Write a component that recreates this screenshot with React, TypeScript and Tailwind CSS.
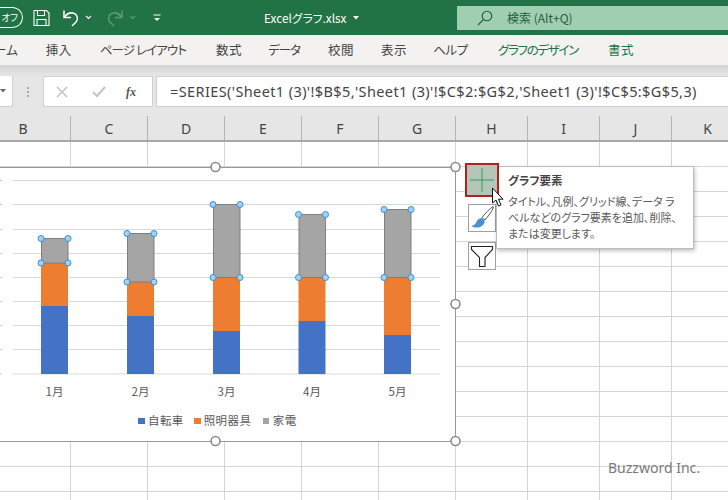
import React from "react";

const ui = '"Noto Sans CJK JP","Noto Sans",sans-serif';
const colW = [71, 77, 77, 77, 77, 77, 72, 72, 72, 72];
const colN = ["B", "C", "D", "E", "F", "G", "H", "I", "J", "K"];
const tabs: [string, number, number, string][] = [
  ["ホーム", -18, 0, "#444"],
  ["挿入", 28, 0.5, "#444"],
  ["ページ レイアウト", 28, -0.9, "#444"],
  ["数式", 30, 0.5, "#444"],
  ["データ", 26, -1, "#444"],
  ["校閲", 28, 0.5, "#444"],
  ["表示", 27, 0.5, "#444"],
  ["ヘルプ", 26, -0.3, "#444"],
  ["グラフのデザイン", 30, -1.3, "#217346"],
  ["書式", 30, 0.5, "#217346"],
];
const bars = [
  { x: 41, b: 306, o: 263, g: 238.5, m: "1月" },
  { x: 127, b: 316, o: 282, g: 233.5, m: "2月" },
  { x: 213, b: 331, o: 277.5, g: 204.5, m: "3月" },
  { x: 298.5, b: 321, o: 277.5, g: 214.5, m: "4月" },
  { x: 384, b: 335, o: 277.5, g: 209.5, m: "5月" },
];
const grid = [180.5, 204.5, 229.5, 253.5, 277.5, 301.5, 325.5, 349.5, 374];

function Handle({ cx, cy }: { cx: number; cy: number }) {
  return <circle cx={cx} cy={cy} r={3} fill="#9fd3f7" stroke="#3d8fd1" strokeWidth={1} />;
}
function Ring({ cx, cy }: { cx: number; cy: number }) {
  return <circle cx={cx} cy={cy} r={4.5} fill="#fff" stroke="#8c8c8c" strokeWidth={1.6} />;
}

export default function App() {
  return (
    <div className="w-[728px] h-[500px] overflow-hidden bg-white flex flex-col [font-feature-settings:'palt']" style={{ fontFamily: ui }}>
      {/* title bar */}
      <div className="h-[35px] shrink-0 bg-[#217346] flex items-center text-white relative">
        <div className="w-[20px] h-[19px] -ml-[2px] mr-[10px] rounded-r-full border border-l-0 border-white flex items-center justify-end pr-[4px] text-[9.5px] leading-none box-content shrink-0">オフ</div>
        <svg width="17" height="18" viewBox="0 0 17 18" fill="none" stroke="#fff" strokeWidth="1.1">
          <path d="M1 1.5h12.5l2.5 2.5v12.5H1z" />
          <path d="M4.5 1.5v5h7v-5M4 16.5v-6h9v6" />
        </svg>
        <svg className="ml-[12px]" width="18" height="18" viewBox="0 0 18 18" fill="none" stroke="#fff" strokeWidth="1.5">
          <path d="M2 1.5v7h7" />
          <path d="M2.5 8C5 4.5 8 3.5 11 4c4 .8 5.500 5 3.500 8.500L10 17" />
        </svg>
        <svg className="ml-[5px]" width="7" height="5" viewBox="0 0 7 5" fill="none" stroke="#fff" strokeWidth="1.2"><path d="M1 1l2.500 2.500L6 1" /></svg>
        <svg className="ml-[14px]" width="18" height="18" viewBox="0 0 18 18" fill="none" stroke="#5c9a7a" strokeWidth="1.5">
          <path d="M16 1.500v7H9" />
          <path d="M15.500 8C13 4.500 10 3.500 7 4c-4 .8-5.500 5-3.500 8.500L8 17" />
        </svg>
        <svg className="ml-[5px]" width="7" height="5" viewBox="0 0 7 5" fill="none" stroke="#5c9a7a" strokeWidth="1.2"><path d="M1 1l2.500 2.500L6 1" /></svg>
        <svg className="ml-[17px]" width="8" height="8" viewBox="0 0 8 8" fill="#fff"><rect x="0.5" y="0.5" width="7" height="1" /><path d="M1 4h6L4 7z" /></svg>
        <span className="ml-[103px] text-[11.8px] whitespace-nowrap w-[83px]">Excelグラフ.xlsx</span>
        <svg className="ml-[6px]" width="6" height="4" viewBox="0 0 6 4" fill="#fff"><path d="M0 0h6L3 3.500z" /></svg>
        <div className="absolute left-[457px] right-0 top-[6px] h-[24px] bg-[#a0ceb1] flex items-center text-[#1f5e3c]">
          <svg className="ml-[20px]" width="16" height="16" viewBox="0 0 16 16" fill="none" stroke="#1f5e3c" strokeWidth="1.1">
            <circle cx="10" cy="6" r="4.800" />
            <path d="M6.500 9.500L1 15" />
          </svg>
          <span className="ml-[14px] text-[12px] whitespace-nowrap">検索 (Alt+Q)</span>
        </div>
      </div>
      {/* ribbon tabs */}
      <div className="h-[30px] shrink-0 bg-[#f3f2f1] flex items-center text-[12.5px] whitespace-nowrap overflow-hidden">
        {tabs.map(([t, m, s, c]) => (
          <span key={t} style={{ marginLeft: m, letterSpacing: s, color: c }}>{t}</span>
        ))}
      </div>
      <div className="h-[11px] shrink-0 bg-gradient-to-b from-[#d4d4d4] to-[#e6e6e6]" />
      {/* formula bar */}
      <div className="h-[31px] shrink-0 bg-[#e6e6e6] flex items-stretch">
        <div className="w-[13px] bg-white border-r border-b border-[#d0d0d0] flex items-center">
          <svg width="6" height="4" viewBox="0 0 6 4" fill="#666"><path d="M0 0h6L3 3.500z" /></svg>
        </div>
        <div className="w-[30px] flex flex-col items-center justify-center gap-[2px]">
          {[0, 1, 2].map((k) => <span key={k} className="block w-[2px] h-[2px] bg-[#aaa]" />)}
        </div>
        <div className="w-[110px] bg-white border border-[#d0d0d0] flex items-center">
          <svg className="ml-[12px]" width="12" height="12" viewBox="0 0 12 12" stroke="#c4c4c4" strokeWidth="1.6" fill="none"><path d="M1 1l10 10M11 1L1 11" /></svg>
          <svg className="ml-[24px]" width="14" height="12" viewBox="0 0 14 12" stroke="#c4c4c4" strokeWidth="2" fill="none"><path d="M1 6l4 4 8-9" /></svg>
          <span className="ml-[20px] text-[12px] italic font-semibold text-[#555]" style={{ fontFamily: '"Liberation Serif",serif' }}>fx</span>
        </div>
        <div className="ml-[3px] flex-1 bg-white border border-[#d0d0d0] border-r-0 flex items-center pl-[13px] text-[14.5px] text-[#444] whitespace-nowrap overflow-hidden tracking-[0.39px]" style={{ fontFamily: '"Noto Sans",sans-serif' }}>
          =SERIES('Sheet1 (3)'!$B$5,'Sheet1 (3)'!$C$2:$G$2,'Sheet1 (3)'!$C$5:$G$5,3)
        </div>
      </div>
      {/* column headers */}
      <div className="h-[35px] shrink-0 bg-[#e6e6e6] flex items-end border-b-2 border-[#a8a8a8]">
        {colN.map((n, i) => (
          <div key={n} style={{ width: colW[i] }} className="h-[24px] shrink-0 border-r border-[#b4b4b4] flex items-center justify-center text-[14px] text-[#444]">
            <span style={{ fontFamily: '"Noto Sans",sans-serif', marginLeft: i === 0 ? -24 : 0 }}>{n}</span>
          </div>
        ))}
      </div>
      {/* sheet */}
      <div className="relative flex-1 overflow-hidden">
        {Array.from({ length: 15 }).map((_, r) => (
          <div key={r} className="flex h-[25px]">
            {colW.map((w, c) => (
              <div key={c} style={{ width: w }} className="shrink-0 border-r border-b border-[#d4d4d4]" />
            ))}
          </div>
        ))}
        {/* chart */}
        <div className="absolute -left-[10px] top-[24.5px] w-[466px] h-[275px] bg-white border-[1.5px] border-[#989898]" />
        <svg className="absolute left-0 -top-[2px]" width="470" height="310" viewBox="0 140 470 310" style={{ fontFamily: ui }}>
          {grid.map((y) => (
            <g key={y}>
              <line x1="12.500" x2="440" y1={y} y2={y} stroke="#d9d9d9" strokeWidth="1" />
              <line x1="0" x2="1.500" y1={y} y2={y} stroke="#bbb" strokeWidth="1" />
            </g>
          ))}
          {bars.map((b) => (
            <g key={b.x}>
              <rect x={b.x} y={b.b} width="27" height={374 - b.b} fill="#4472c4" />
              <rect x={b.x} y={b.o} width="27" height={b.b - b.o} fill="#ed7d31" />
              <rect x={b.x + 0.5} y={b.g} width="26.500" height={b.o - b.g} fill="#a5a5a5" stroke="#7f7f7f" strokeWidth="1" />
              <Handle cx={b.x} cy={b.g} />
              <Handle cx={b.x + 27} cy={b.g} />
              <Handle cx={b.x} cy={b.o} />
              <Handle cx={b.x + 27} cy={b.o} />
              <text x={b.x + 13.500} y="396" fontSize="11.500" fill="#595959" textAnchor="middle">{b.m}</text>
            </g>
          ))}
          <Ring cx={215.500} cy={167} />
          <Ring cx={455.500} cy={167} />
          <Ring cx={455.500} cy={304} />
          <Ring cx={215.500} cy={441} />
          <Ring cx={455.500} cy={441} />
        </svg>
        <div className="absolute left-[138px] top-[273px] flex items-center text-[11.500px] text-[#595959] tracking-[0.4px] leading-none whitespace-nowrap [font-feature-settings:normal]">
          <span className="w-[6.500px] h-[6.500px] bg-[#4472c4]" />
          <span className="ml-[3.500px]">自転車</span>
          <span className="ml-[10.500px] w-[6.500px] h-[6.500px] bg-[#ed7d31]" />
          <span className="ml-[3px]">照明器具</span>
          <span className="ml-[11.500px] w-[6.500px] h-[6.500px] bg-[#a5a5a5]" />
          <span className="ml-[3.500px]">家電</span>
        </div>
        {/* chart buttons */}
        <div className="absolute left-[468px] top-[62px] w-[28px] h-[28px] border border-[#a0a0a0] bg-white flex items-center justify-center overflow-hidden">
          <svg width="26" height="26" viewBox="0 0 26 26">
            <path d="M24 1.500c-3 2-8 7-11 11l3 2.500c3-3.500 7-8.500 8.500-13z" fill="#fff" stroke="#555" strokeWidth="1" />
            <path d="M12.500 13c-2.500.3-4 1.500-5 4-.8 2-2.500 3.200-5 4 3.500 2.500 9 2 11.500-1 1.500-1.800 2-3.500 1.500-4.500z" fill="#4a90d9" />
          </svg>
        </div>
        <div className="absolute left-[468px] top-[100px] w-[28px] h-[28px] border border-[#a0a0a0] bg-white flex items-center justify-center">
          <svg width="24" height="24" viewBox="0 0 24 24" fill="none" stroke="#222" strokeWidth="1.100"><path d="M1.500 2.500h21v3L15 13.500v9H9.500v-9L1.500 5.500z" /></svg>
        </div>
        {/* tooltip */}
        <div className="absolute left-[496px] top-[24px] w-[198px] h-[83px] bg-white border border-[#bdbdbd] shadow-[1px_2px_4px_rgba(0,0,0,0.25)] pl-[11px] pt-[4px] text-[#595959]">
          <div className="text-[11.500px] font-bold leading-[18px] text-[#444]">グラフ要素</div>
          <div className="mt-[4px] text-[11px] leading-[16px] whitespace-nowrap">
            <div>タイトル、凡例、グリッド線、データ ラ</div>
            <div>ベルなどのグラフ要素を追加、削除、</div>
            <div>または変更します。</div>
          </div>
        </div>
        <div className="absolute left-[465px] top-[21px] w-[34px] h-[34px] border-[2px] border-[#b0201f] bg-[#b5c6b9] flex items-center justify-center">
          <svg width="24" height="24" viewBox="0 0 24 24" stroke="#2f9e57" strokeWidth="1"><path d="M12 0v24M0 12h24" /></svg>
        </div>
        {/* cursor */}
        <svg className="absolute left-[491px] top-[45px]" width="14" height="21" viewBox="0 0 14 21">
          <path d="M1.500 1v15l3.500-3 2.500 6 2.500-1-2.500-5.800h4.500z" fill="#fff" stroke="#111" strokeWidth="1" />
        </svg>
        {/* watermark */}
        <div className="absolute left-[608px] top-[315px] text-[14px] text-[#7a7a7a] whitespace-nowrap" style={{ fontFamily: '"Noto Sans",sans-serif' }}>Buzzword Inc.</div>
      </div>
    </div>
  );
}
